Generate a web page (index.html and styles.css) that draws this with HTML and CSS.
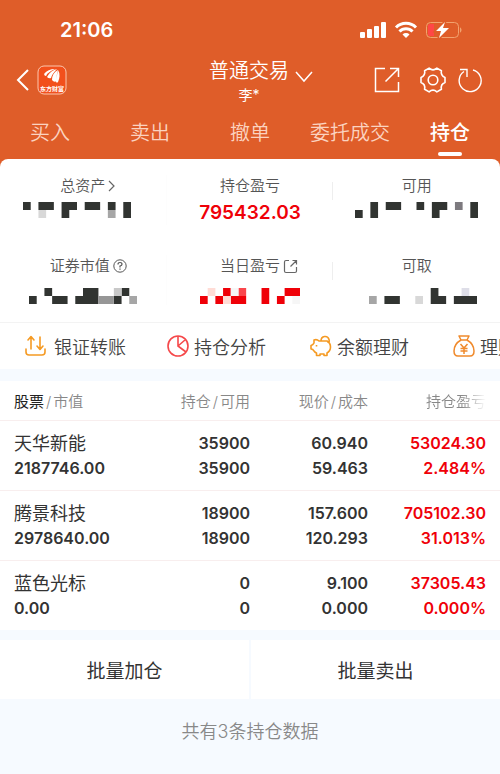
FILE: index.html
```
<!DOCTYPE html>
<html lang="zh-CN">
<head>
    <meta charset="UTF-8">
    <meta name="viewport" content="width=device-width, initial-scale=1.0">
    <title>普通交易</title>
    <link rel="stylesheet" href="styles.css">
</head>
<body>
    <header class="header">
        <div class="status">
            <span class="time">21:06</span>
            <svg class="status-icons" width="104" height="20" viewBox="0 0 104 20" fill="#fff">
                <rect x="0" y="12" width="5" height="6" rx="1"/>
                <rect x="7" y="9" width="5" height="9" rx="1"/>
                <rect x="14" y="6" width="5" height="12" rx="1"/>
                <rect x="21" y="2" width="5" height="16" rx="1"/>
                <g fill="none" stroke="#fff" stroke-width="3">
                    <path d="M36 7.500a14 14 0 0 1 20 0"/>
                    <path d="M39.500 11.500a9 9 0 0 1 13 0"/>
                </g>
                <path d="M42.500 14.500a5 5 0 0 1 7 0L46 18z"/>
                <rect x="66.500" y="2.500" width="32" height="15" rx="4" fill="none" stroke="#f2a26f"/>
                <path d="M100 7.500c2 .5 2 4.500 0 5z" fill="#f2a26f"/>
                <path d="M70 4h4v12h-4q-2 0-2-2V6q0-2 2-2z" fill="#ff4747"/>
                <path d="M85 2 76 11h5l-2 7 10-10h-6z" stroke="#df5d29" stroke-width="3" paint-order="stroke"/>
            </svg>
        </div>
        <div class="title-bar">
            <div class="nav-left">
                <button class="icon-button" aria-label="返回">
                    <svg width="14" height="22" viewBox="0 0 14 22" fill="none" stroke="#fff" stroke-width="2"><path d="M12 1 2 11l10 10"/></svg>
                </button>
                <svg class="logo" width="30" height="30" viewBox="0 0 30 30">
                    <rect x="1" y="1" width="28" height="28" rx="6" fill="#f2501c" stroke="#fbc7ae"/>
                    <g fill="#fff">
                        <path d="M7 9q4-5 11-5-5 2-8 5 0 2-2 2z"/>
                        <path d="M10 12q4-7 10-8-5 5-6 9-2 1-4-1z"/>
                        <path d="M15 15q0-7 6-10-2 5-1 11-3 2-5-1z"/>
                        <path d="M20 10l1-5q3 5 0 12-1 1-2 0z"/>
                    </g>
                    <text class="logo-text" x="15" y="26" text-anchor="middle">东方财富</text>
                </svg>
            </div>
            <div class="account">
                <button class="account-switch">普通交易
                    <svg width="18" height="12" viewBox="0 0 18 12" fill="none" stroke="#fff" stroke-width="1.500"><path d="m1 1 8 9 8-9"/></svg>
                </button>
                <span class="account-name">李*</span>
            </div>
            <div class="nav-right">
                <button class="icon-button" aria-label="分享">
                    <svg width="26" height="26" viewBox="0 0 26 26" fill="none" stroke="#fff" stroke-width="1.500"><path d="M11 1.500H1.500v23h23V15M11.500 14.500l13-13M16 1.500h8.500V10"/></svg>
                </button>
                <button class="icon-button" aria-label="设置">
                    <svg width="26" height="26" viewBox="0 0 26 26" fill="none" stroke="#fff" stroke-width="1.600" stroke-linejoin="round">
                        <path d="M25 10.400v5.200Q20.400 17.300 21.400 22.300L16.900 24.900Q13 21.500 9.100 24.900L4.600 22.300Q5.600 17.300 1 15.600V10.400Q5.600 8.700 4.600 3.700L9.100 1.100Q13 4.500 16.900 1.100L21.400 3.700Q20.400 8.700 25 10.400z"/>
                        <circle cx="13" cy="13" r="4.800"/>
                    </svg>
                </button>
                <button class="icon-button" aria-label="刷新">
                    <svg width="24" height="26" viewBox="0 0 24 26" fill="none" stroke="#fff" stroke-width="1.400"><path d="M15 3a11 11 0 1 1-9 1.500M2 2.500h7V10"/></svg>
                </button>
            </div>
        </div>
        <nav class="tabs">
            <a class="tab" href="#">买入</a>
            <a class="tab" href="#">卖出</a>
            <a class="tab" href="#">撤单</a>
            <a class="tab" href="#">委托成交</a>
            <a class="tab active" href="#">持仓</a>
        </nav>
    </header>

    <main>
        <section class="summary">
            <div class="stat">
                <span class="stat-label">总资产<svg width="8" height="12" viewBox="0 0 8 12" fill="none" stroke="#666" stroke-width="1.200"><path d="m1 1 5 5-5 5"/></svg></span>
                <svg class="mosaic shift-left" width="108" height="16" viewBox="0 0 14 2" preserveAspectRatio="none" fill="#313431">
                    <path d="M0 0h1v1H0zM2 0h2v1H2zM5 0h2v1H6v1H5zM8 0h2v1H8zM11 0h1v1h-1zM13 0h1v2h-1z"/>
                    <path d="M2 1h1v1H2z" fill="#d8d8d8"/>
                    <path d="M11 1h1v1h-1z" fill="#a6a6a6"/>
                </svg>
            </div>
            <div class="stat">
                <span class="stat-label">持仓盈亏</span>
                <strong class="stat-value">795432.03</strong>
            </div>
            <div class="stat">
                <span class="stat-label">可用</span>
                <svg class="mosaic" width="123" height="16" viewBox="0 0 16 2" preserveAspectRatio="none" fill="#313431">
                    <path d="M0 1h1v1H0zM2 0h1v2H2zM4 0h2v1H4zM8 0h1v1H8zM10 0h2v1h-1v1h-1zM15 0h1v2h-1z"/>
                    <path d="M13 0h1v1h-1z" fill="#7d7a7f"/>
                </svg>
            </div>
            <div class="stat">
                <span class="stat-label">证券市值<svg width="14" height="14" viewBox="0 0 14 14" fill="none" stroke="#555"><circle cx="7" cy="7" r="6.200"/><path d="M5 5.500q0-2 2-2t2 1.800Q9 6.500 7 7v1.500M7 9.500v1.200" stroke-width="1.200"/></svg></span>
                <svg class="mosaic" width="108" height="16" viewBox="0 0 14 2" preserveAspectRatio="none" fill="#313431">
                    <path d="M0 1h1v1H0zM2 0h1v1H2zM3 1h2v1H3zM6 1h1V0h2v2H6zM11 1h1v1h-1zM12 0h1v1h-1z"/>
                    <path d="M11 0h1v1h-1z" fill="#c8c8c8"/>
                    <path d="M9 1h2v1H9z" fill="#969696"/>
                    <path d="M13 1h1v1h-1z" fill="#a6a6a6"/>
                </svg>
            </div>
            <div class="stat">
                <span class="stat-label">当日盈亏<svg width="15" height="15" viewBox="0 0 15 15" fill="none" stroke="#666" stroke-width="1.200"><path d="M6 1.500H3Q1.500 1.500 1.500 3v9q0 1.500 1.500 1.500h9q1.500 0 1.500-1.500V8M7.500 7.500l6-6M9.500 1.500h4v4"/></svg></span>
                <svg class="mosaic" width="100" height="16" viewBox="0 0 13 2" preserveAspectRatio="none" fill="#ef0008">
                    <path d="M0 1h1v1H0zM2 1h1v1H2zM3 0h1v1H3zM4 1h2v1H4zM8 0h1v2H8zM10 1h1v1h-1zM11 0h2v1h-2z"/>
                    <path d="M1 0h1v1H1zM3 1h1v1H3z" fill="#ffdcd6"/>
                    <path d="M5 0h1v1H5z" fill="#fa464c"/>
                    <path d="M4 0h1v1H4zM12 1h1v1h-1z" fill="#f6f6f6"/>
                </svg>
            </div>
            <div class="stat">
                <span class="stat-label">可取</span>
                <svg class="mosaic shift-right" width="108" height="16" viewBox="0 0 14 2" preserveAspectRatio="none" fill="#313431">
                    <path d="M2 1h2v1H2zM8 0h1v1h1v1H8zM11 1h3v1h-3z"/>
                    <path d="M12 0h1v1h-1z" fill="#dedee8"/>
                    <path d="M0 1h1v1H0z" fill="#a6a6a6"/>
                    <path d="M6 1h1v1H6z" fill="#d8d8d8"/>
                </svg>
            </div>
        </section>

        <nav class="actions">
            <a class="action" href="#">
                <svg width="25" height="22" viewBox="0 0 25 22" fill="none" stroke="#f59a23" stroke-width="1.600" stroke-linecap="round" stroke-linejoin="round"><path d="M2 14v3q0 3 3 3h13q3 0 3-3v-3M7 14V2M4 5l3-3.500L10 5M16 2v12M13 11l3 3.500 3-3.500"/></svg>
                银证转账
            </a>
            <a class="action" href="#">
                <svg width="22" height="22" viewBox="0 0 22 22" fill="none" stroke="#f5484a" stroke-width="1.600"><circle cx="11" cy="11" r="10"/><path d="M11 1v10l8 6M11 11l7-6"/></svg>
                持仓分析
            </a>
            <a class="action" href="#">
                <svg width="22" height="22" viewBox="0 0 22 22" fill="none" stroke="#f59a23" stroke-width="1.600" stroke-linejoin="round"><path d="M4 5v3Q3 10 1 10.500V14q2 0 3 2 1 1.500 2.500 2v2.500H10V19h4v1.500h3V18q3.500-2 3.500-6T17 6H9Q7 4 4 5zM11 6q0-4 3.500-4.500T19 4.500 17.500 7"/><path d="M6.500 10v1.500"/></svg>
                余额理财
            </a>
            <a class="action" href="#">
                <svg width="22" height="22" viewBox="0 0 22 22" fill="none" stroke="#f08a2c" stroke-width="1.500" stroke-linejoin="round"><path d="M6 1h10l-2 4H8zM8 5Q1 9 1 16q0 5 4 5h12q4 0 4-5 0-7-7-11"/><path d="m7.500 9 3.500 4 3.500-4M11 13v6M7.500 13.500h7M7.500 16h7"/></svg>
                理财
            </a>
        </nav>

        <table class="holdings">
            <thead>
                <tr>
                    <th class="col-name"><b>股票</b><span class="slash">/</span>市值</th>
                    <th class="col-amount">持仓<span class="slash">/</span>可用</th>
                    <th class="col-price">现价<span class="slash">/</span>成本</th>
                    <th class="col-profit"><span class="fade">持仓盈亏</span></th>
                </tr>
            </thead>
            <tbody>
                <tr>
                    <td><span class="name">天华新能</span>2187746.00</td>
                    <td>35900<br>35900</td>
                    <td>60.940<br>59.463</td>
                    <td class="up">53024.30<br>2.484%</td>
                </tr>
                <tr>
                    <td><span class="name">腾景科技</span>2978640.00</td>
                    <td>18900<br>18900</td>
                    <td>157.600<br>120.293</td>
                    <td class="up">705102.30<br>31.013%</td>
                </tr>
                <tr>
                    <td><span class="name">蓝色光标</span>0.00</td>
                    <td>0<br>0</td>
                    <td>9.100<br>0.000</td>
                    <td class="up">37305.43<br>0.000%</td>
                </tr>
            </tbody>
        </table>

        <div class="batch">
            <button>批量加仓</button>
            <button>批量卖出</button>
        </div>
        <p class="count">共有3条持仓数据</p>
    </main>
</body>
</html>
```
FILE: styles.css
```
* {
    box-sizing: border-box;
}
body {
    font-family: Inter, "Noto Sans CJK SC", sans-serif;
    font-weight: 350;
    background-color: #f6faff;
    color: #333;
    margin: 0;
}
button {
    background: none;
    border: none;
    padding: 0;
    font: inherit;
    color: inherit;
    cursor: pointer;
}
a {
    color: inherit;
    text-decoration: none;
}
svg {
    display: block;
    flex-shrink: 0;
}
.header {
    background-color: #df5d29;
    color: #fff;
    padding-bottom: 8px;
    margin-bottom: -8px;
}
.status {
    display: flex;
    justify-content: space-between;
    align-items: center;
    height: 58px;
    padding: 2px 36px 0 60px;
}
.time {
    font-size: 20px;
    font-weight: 600;
}
.title-bar {
    display: grid;
    grid-template-columns: 1fr auto 1fr;
    height: 50px;
    padding: 0 18px 0 16px;
}
.nav-left,
.nav-right {
    display: flex;
    align-items: center;
    height: 44px;
}
.nav-left {
    gap: 7px;
}
.nav-right {
    justify-content: flex-end;
    gap: 12px;
}
.nav-right .icon-button:nth-child(2) {
    margin-left: 8px;
}
.logo-text {
    font-size: 6px;
    font-weight: 700;
    fill: #fff;
}
.account {
    display: flex;
    flex-direction: column;
    align-items: center;
}
.account-switch {
    display: flex;
    align-items: center;
    gap: 6px;
    padding-left: 24px;
    font-size: 20px;
    line-height: 26px;
}
.account-switch svg {
    margin-top: 12px;
}
.account-name {
    font-size: 14px;
    font-weight: 400;
    line-height: 22px;
}
.tabs {
    display: flex;
    height: 51px;
}
.tab {
    flex: 1;
    display: flex;
    flex-direction: column;
    align-items: center;
    padding-top: 10px;
    font-size: 20px;
    line-height: 30px;
    color: #fbd3c0;
}
.tab.active {
    font-weight: 500;
    color: #fff;
}
.tab.active::after {
    content: "";
    width: 24px;
    height: 4px;
    margin-top: 4px;
    border-radius: 2px;
    background-color: #fff;
}
.summary {
    display: grid;
    grid-template-columns: repeat(3, 1fr);
    row-gap: 30px;
    padding: 16px 0 17px;
    background-color: #fff;
    border-radius: 8px 8px 0 0;
    border-bottom: 1px solid #f3f3f3;
}
.stat {
    display: flex;
    flex-direction: column;
    align-items: center;
    height: 50px;
}
.stat:nth-child(3n+1) {
    border-right: 1px solid #fdfdfd;
}
.stat:nth-child(3n+2) {
    background: linear-gradient(#eee, #eee) no-repeat right 7px / 1px 18px;
}
.stat-label {
    display: flex;
    align-items: center;
    gap: 3px;
    font-size: 15px;
    line-height: 22px;
    color: #555;
}
.stat:nth-child(3n+1) .stat-label {
    padding-left: 11px;
}
.stat:nth-child(5) .stat-label {
    padding-left: 18px;
}
.stat-value {
    font-size: 19px;
    font-weight: 600;
    line-height: 32px;
    color: #ef0008;
}
.mosaic {
    margin-top: 5px;
}
.stat:nth-child(n+4) .mosaic {
    margin-top: 11px;
}
.shift-left {
    margin-right: 12px;
}
.shift-right {
    margin-left: 12px;
}
.actions {
    display: flex;
    overflow: hidden;
    height: 46px;
    padding: 0 0 1px 24px;
    background-color: #fff;
}
.action {
    display: flex;
    flex: 0 0 143px;
    align-items: center;
    gap: 5px;
    font-size: 18px;
    color: #444;
    white-space: nowrap;
}
.holdings {
    width: 100%;
    margin-top: 12px;
    background-color: #fff;
    border-collapse: collapse;
    table-layout: fixed;
}
.holdings th,
.holdings td {
    padding: 0;
    text-align: right;
}
.holdings th {
    height: 39px;
    font-size: 15px;
    font-weight: 350;
    color: #888;
}
.holdings th b {
    font-weight: 400;
    color: #222;
}
.slash {
    margin: 0 2px;
}
.holdings td {
    height: 70px;
    padding-top: 2px;
    border-top: 1px solid #f8eeee;
    font-size: 16px;
    font-weight: 600;
    line-height: 25px;
}
.holdings th:first-child,
.holdings td:first-child {
    padding-left: 14px;
    text-align: left;
}
.holdings th:last-child,
.holdings td:last-child {
    padding-right: 14px;
}
.col-amount {
    width: 110px;
}
.col-price {
    width: 118px;
}
.col-profit {
    width: 132px;
}
.fade {
    mask-image: linear-gradient(to right, #000 60%, transparent);
}
.name {
    display: block;
    font-size: 18px;
    font-weight: 400;
}
.holdings .up {
    color: #ef0008;
}
.batch {
    display: grid;
    grid-template-columns: 1fr 1fr;
    gap: 2px;
    margin-top: 10px;
}
.batch button {
    height: 59px;
    background-color: #fff;
    font-size: 19px;
    font-weight: 400;
}
.count {
    margin: 20px 0;
    font-size: 18px;
    line-height: 26px;
    text-align: center;
    color: #888;
}
```
